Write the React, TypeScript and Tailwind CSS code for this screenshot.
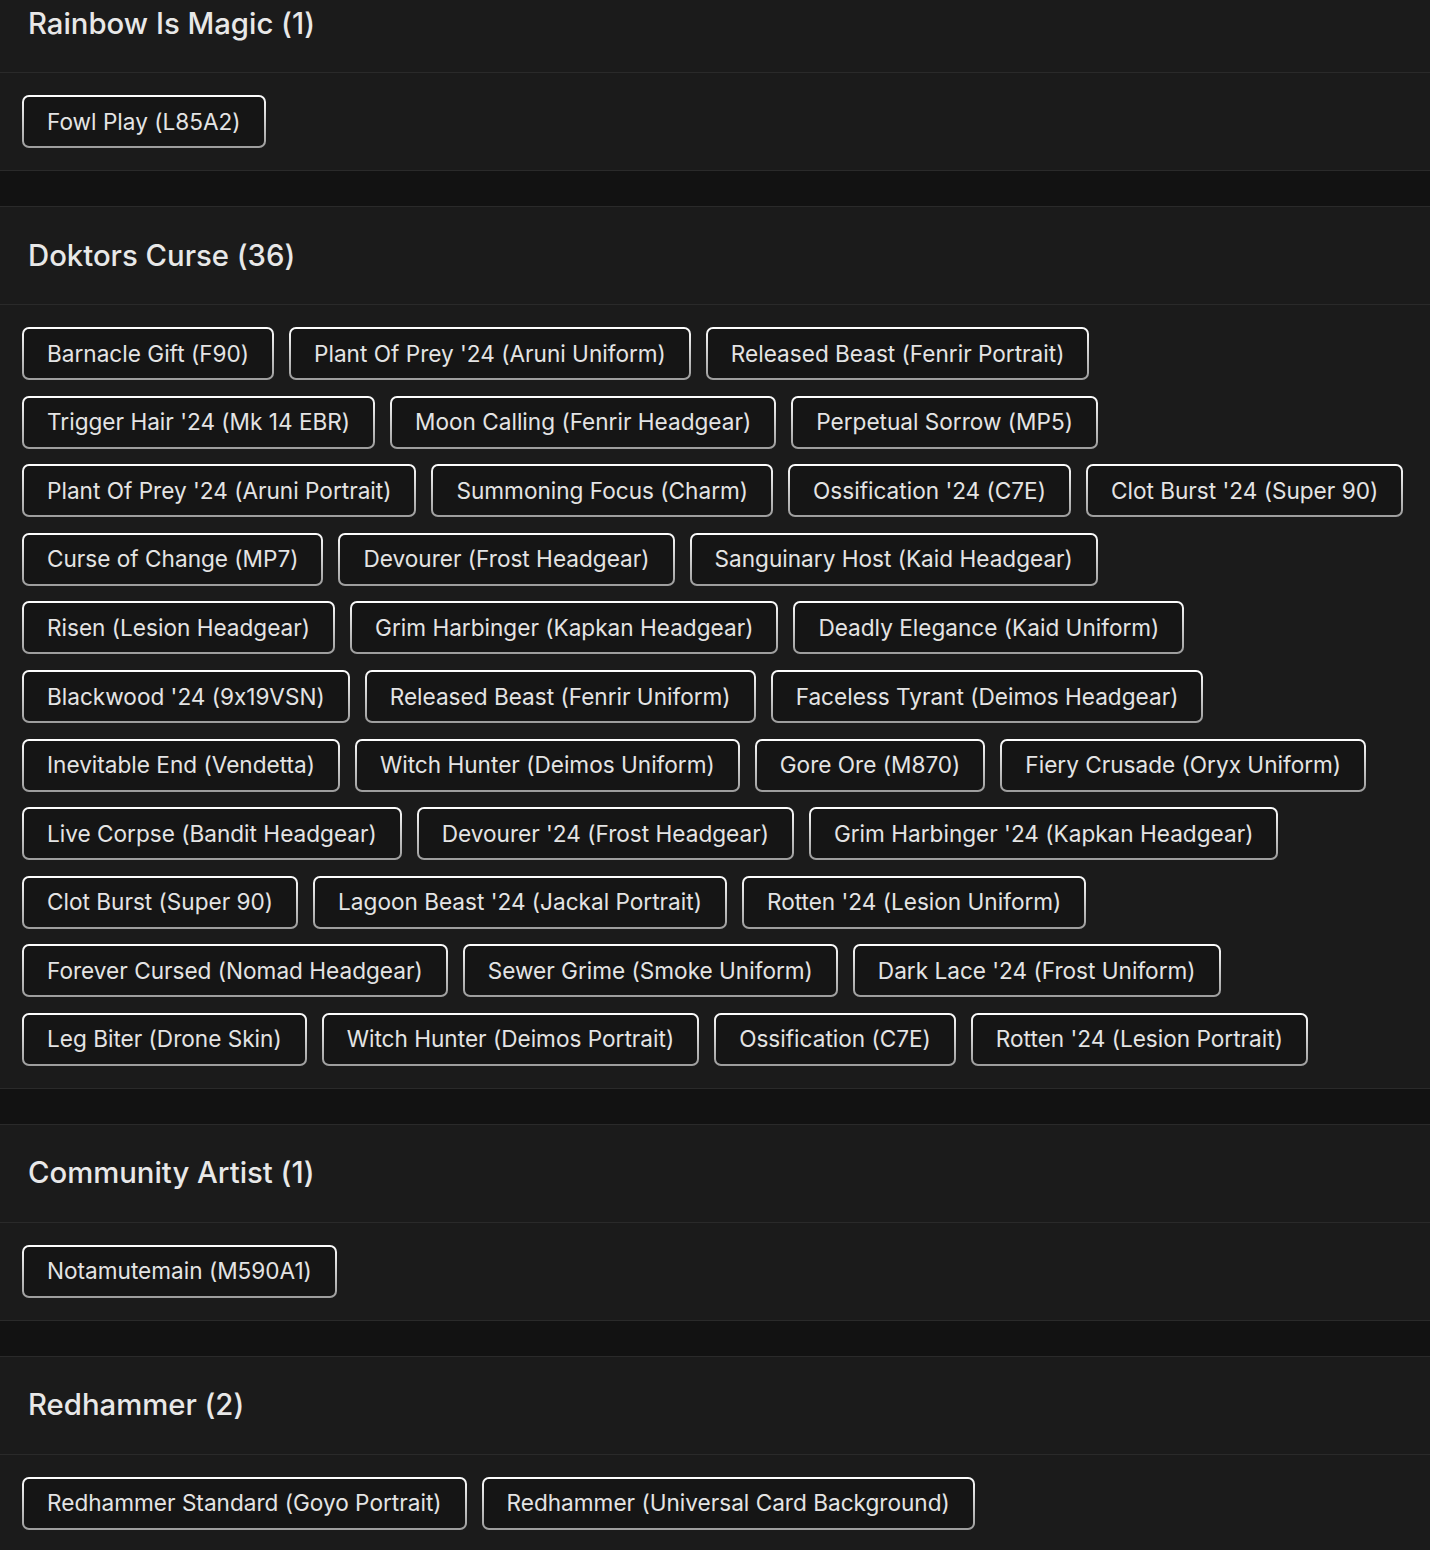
import React from "react";

type Section = {
  title: string;
  rows: string[][];
};

const sections: Section[] = [
  {
    title: "Rainbow Is Magic (1)",
    rows: [["Fowl Play (L85A2)"]],
  },
  {
    title: "Doktors Curse (36)",
    rows: [
      ["Barnacle Gift (F90)", "Plant Of Prey '24 (Aruni Uniform)", "Released Beast (Fenrir Portrait)"],
      ["Trigger Hair '24 (Mk 14 EBR)", "Moon Calling (Fenrir Headgear)", "Perpetual Sorrow (MP5)"],
      [
        "Plant Of Prey '24 (Aruni Portrait)",
        "Summoning Focus (Charm)",
        "Ossification '24 (C7E)",
        "Clot Burst '24 (Super 90)",
      ],
      ["Curse of Change (MP7)", "Devourer (Frost Headgear)", "Sanguinary Host (Kaid Headgear)"],
      ["Risen (Lesion Headgear)", "Grim Harbinger (Kapkan Headgear)", "Deadly Elegance (Kaid Uniform)"],
      ["Blackwood '24 (9x19VSN)", "Released Beast (Fenrir Uniform)", "Faceless Tyrant (Deimos Headgear)"],
      [
        "Inevitable End (Vendetta)",
        "Witch Hunter (Deimos Uniform)",
        "Gore Ore (M870)",
        "Fiery Crusade (Oryx Uniform)",
      ],
      ["Live Corpse (Bandit Headgear)", "Devourer '24 (Frost Headgear)", "Grim Harbinger '24 (Kapkan Headgear)"],
      ["Clot Burst (Super 90)", "Lagoon Beast '24 (Jackal Portrait)", "Rotten '24 (Lesion Uniform)"],
      ["Forever Cursed (Nomad Headgear)", "Sewer Grime (Smoke Uniform)", "Dark Lace '24 (Frost Uniform)"],
      [
        "Leg Biter (Drone Skin)",
        "Witch Hunter (Deimos Portrait)",
        "Ossification (C7E)",
        "Rotten '24 (Lesion Portrait)",
      ],
    ],
  },
  {
    title: "Community Artist (1)",
    rows: [["Notamutemain (M590A1)"]],
  },
  {
    title: "Redhammer (2)",
    rows: [["Redhammer Standard (Goyo Portrait)", "Redhammer (Universal Card Background)"]],
  },
];

function Chip({ label }: { label: string }) {
  return (
    <div className="rounded-[7px] bg-gradient-to-b from-white to-[#9c9c9c] p-[2px]">
      <div className="flex h-[49px] items-center whitespace-nowrap rounded-[5px] bg-[#151515] px-[23px] text-[22.6px] text-[#e4e4e4]">
        {label}
      </div>
    </div>
  );
}

function Card({ section }: { section: Section }) {
  return (
    <div className="border-y border-[#2a2a2a] bg-[#1b1b1b]">
      <div className="flex h-[98px] items-center border-b border-[#2a2a2a] px-[28px]">
        <h2 className="text-[29.3px] font-medium text-[#e8e8e8]">{section.title}</h2>
      </div>
      <div className="flex flex-col gap-[15.6px] px-[22px] py-[22px]">
        {section.rows.map((row, i) => (
          <div key={i} className="flex gap-[15px]">
            {row.map((label) => (
              <Chip key={label} label={label} />
            ))}
          </div>
        ))}
      </div>
    </div>
  );
}

export default function App() {
  return (
    <div
      className="min-h-[1550px] overflow-hidden bg-[#121212]"
      style={{ fontFamily: "Inter, 'Open Sans', sans-serif", fontFeatureSettings: '"calt" 0' }}
    >
      <div className="-mt-[26px] flex flex-col gap-[35px]">
        {sections.map((s) => (
          <Card key={s.title} section={s} />
        ))}
      </div>
    </div>
  );
}
